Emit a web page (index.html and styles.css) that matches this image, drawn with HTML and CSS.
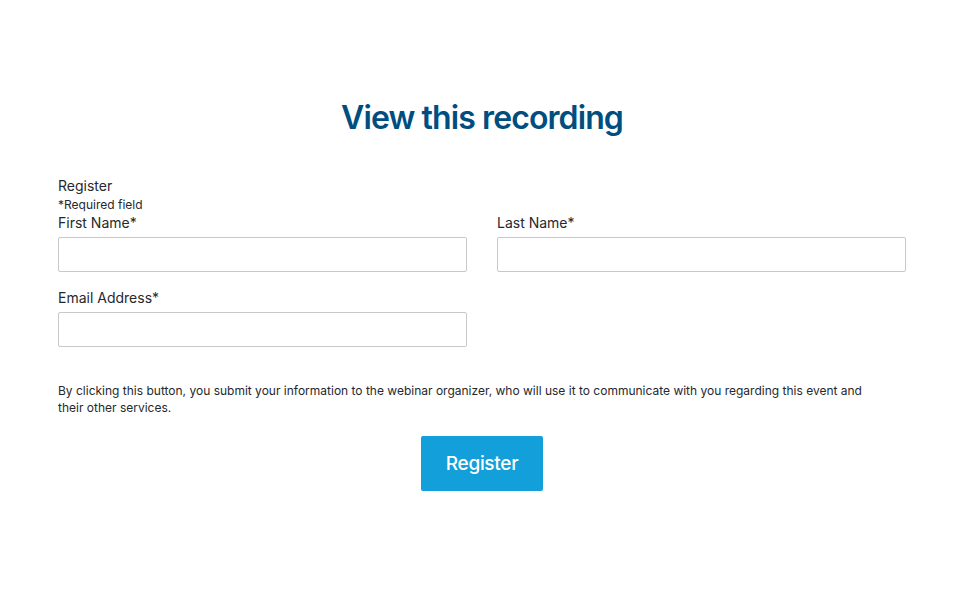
FILE: index.html
```html
<!DOCTYPE html>
<html lang="en">
<head>
<meta charset="utf-8">
<title>View this recording</title>
<link rel="stylesheet" href="styles.css">
</head>
<body>
<main class="page">
  <h1 class="title">View this recording</h1>
  <form class="form">
    <div class="intro">
      <div class="intro-title">Register</div>
      <div class="intro-note">*Required field</div>
    </div>
    <div class="grid">
      <label class="field">
        <span class="label">First Name*</span>
        <input class="input" type="text">
      </label>
      <label class="field">
        <span class="label">Last Name*</span>
        <input class="input" type="text">
      </label>
      <label class="field">
        <span class="label">Email Address*</span>
        <input class="input" type="email">
      </label>
    </div>
    <p class="disclaimer">By clicking this button, you submit your information to the webinar organizer, who will use it to communicate with you regarding this event and their other services.</p>
    <div class="actions">
      <button class="btn" type="button">Register</button>
    </div>
  </form>
</main>
</body>
</html>
```

FILE: styles.css
```css
* { box-sizing: border-box; }
html, body { margin: 0; padding: 0; background: #fff; }
body {
  font-family: Inter, "Noto Sans", sans-serif;
  color: #25282d;
}
.page {
  padding: 96px 57px 0 58px;
}
.title {
  margin: 0;
  text-align: center;
  font-size: 32px;
  font-weight: 600;
  letter-spacing: -0.9px;
  line-height: 44px;
  color: #004e7f;
}
.form {
  margin-top: 37px;
}
.intro-title {
  font-size: 14px;
  line-height: 18px;
}
.intro-note {
  font-size: 12px;
  line-height: 19px;
}
.grid {
  display: grid;
  grid-template-columns: 1fr 1fr;
  column-gap: 30px;
  row-gap: 17px;
}
.field {
  display: flex;
  flex-direction: column;
}
.label {
  font-size: 14px;
  line-height: 18px;
  margin-bottom: 5px;
}
.input {
  height: 35px;
  border: 1px solid #c8c8c8;
  border-radius: 2px;
  background: #fff;
  font: inherit;
  padding: 0 8px;
}
.disclaimer {
  margin: 35px 0 0;
  font-size: 12px;
  line-height: 17px;
  max-width: 820px;
}
.actions {
  display: flex;
  justify-content: center;
  margin-top: 20px;
}
.btn {
  width: 122px;
  height: 55px;
  border: none;
  border-radius: 2px;
  background: #139fda;
  color: #fff;
  font-family: Inter, "Noto Sans", sans-serif;
  font-size: 19px;
  font-weight: 500;
  letter-spacing: -0.3px;
  cursor: pointer;
}
```
